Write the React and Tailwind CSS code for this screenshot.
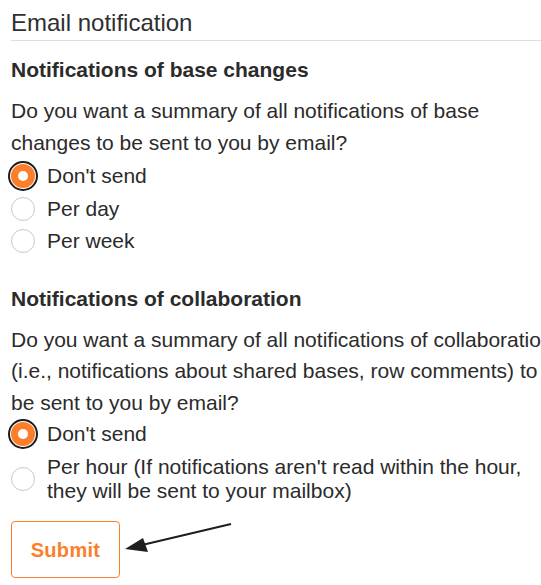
import React, { useState } from 'react';

const font = { fontFamily: '"Liberation Sans", Arial, sans-serif' };

function Radio({ checked, focused, label, onSelect }) {
  return (
    <label className="flex items-center py-[4.25px] leading-6 cursor-pointer" onClick={onSelect}>
      <span className="shrink-0 w-[36px] flex items-center">
        {checked ? (
          <span
            className={
              'flex h-6 w-6 items-center justify-center rounded-full bg-[#fd7e2a] ' +
              (focused ? 'outline-[2.5px] outline-solid outline-offset-[1px] outline-[#1c1c1c]' : '')
            }
          >
            <span className="h-[10px] w-[10px] rounded-full bg-white" />
          </span>
        ) : (
          <span className="h-6 w-6 rounded-full border border-[#c9c9c9] bg-white" />
        )}
      </span>
      <span className="text-[21px] text-[#2b2b2b]">{label}</span>
    </label>
  );
}

export default function App() {
  const [base, setBase] = useState('none');
  const [collab, setCollab] = useState('none');

  return (
    <div className="w-full overflow-hidden bg-white" style={font}>
      <div className="relative w-[555px] pl-[11px] pt-[7px] pb-[6px]">
        <h1 className="border-b border-[#dedede] pb-[1px] text-[24px] leading-[32px] text-[#2f2f2f]">
          Email notification
        </h1>

        <h2 className="mt-[15px] text-[21px] font-bold leading-[28px] text-[#2b2b2b]">
          Notifications of base changes
        </h2>
        <p className="mt-[11px] text-[21px] leading-[32px] text-[#2b2b2b]">
          Do you want a summary of all notifications of base changes to be sent to you by email?
        </p>
        <div className="mt-[1px] flex flex-col">
          <Radio checked={base === 'none'} focused label="Don't send" onSelect={() => setBase('none')} />
          <Radio checked={base === 'day'} label="Per day" onSelect={() => setBase('day')} />
          <Radio checked={base === 'week'} label="Per week" onSelect={() => setBase('week')} />
        </div>

        <h2 className="mt-[27px] text-[21px] font-bold leading-[28px] text-[#2b2b2b]">
          Notifications of collaboration
        </h2>
        <p className="mt-[11px] text-[21px] leading-[31.5px] text-[#2b2b2b]">
          Do you want a summary of all notifications of collaboration (i.e., notifications about shared bases, row
          comments) to be sent to you by email?
        </p>
        <div className="flex flex-col">
          <Radio checked={collab === 'none'} focused label="Don't send" onSelect={() => setCollab('none')} />
          <Radio
            checked={collab === 'hour'}
            label="Per hour (If notifications aren't read within the hour, they will be sent to your mailbox)"
            onSelect={() => setCollab('hour')}
          />
        </div>

        <button
          type="button"
          className="mt-[14px] h-[57px] w-[109px] rounded-[4px] border border-[#fd7e2a] bg-white text-[20px] font-bold tracking-[0.3px] text-[#fd7e2a]"
        >
          Submit
        </button>

        <svg className="absolute left-[120px] top-[518px]" width="120" height="40" viewBox="0 0 120 40">
          <line x1="111" y1="6" x2="22" y2="27" stroke="#1e1e1e" strokeWidth="2" />
          <polygon points="5,31 23,20 28,34" fill="#1e1e1e" />
        </svg>
      </div>
    </div>
  );
}
